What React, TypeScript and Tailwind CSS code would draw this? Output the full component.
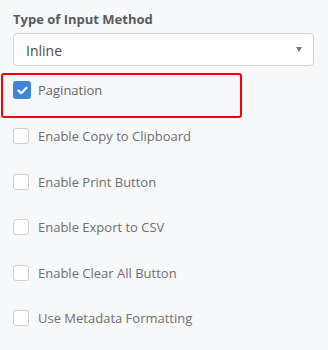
import React from "react";

const options = [
  "Enable Copy to Clipboard",
  "Enable Print Button",
  "Enable Export to CSV",
  "Enable Clear All Button",
  "Use Metadata Formatting",
];

export default function App() {
  return (
    <div
      className="w-[328px] h-[350px] bg-[#f7f8fa] pl-[13px] pr-[14px] pt-[10px] overflow-hidden"
      style={{ fontFamily: '"Open Sans", sans-serif' }}
    >
      <div className="h-[18px] leading-[18px] text-[13px] font-bold text-[#5a5a5a]">Type of Input Method</div>
      <div className="mt-[5px] h-[33px] bg-white border border-[#d3d3d3] rounded-[4px] flex items-center justify-between pl-[12px] pr-[11px]">
        <span className="text-[14px] text-[#4a4a4a] pt-[1px]">Inline</span>
        <span className="w-0 h-0 border-l-[3.5px] border-r-[3.5px] border-t-[5px] border-l-transparent border-r-transparent border-t-[#777]" />
      </div>

      <div className="mt-[7px] -ml-[12px] w-[241px] h-[45px] border-2 border-[#ff0000] rounded-[3px] pl-[10px] pt-[6px]">
        <div className="flex items-center h-[18px]">
          <span className="w-[18px] h-[18px] rounded-[3px] bg-[#3f87d6] flex items-center justify-center">
            <svg width="11" height="9" viewBox="0 0 11 9" fill="none">
              <path d="M1.5 4.6 L4.2 7.2 L9.5 1.8" stroke="white" strokeWidth="2.2" strokeLinecap="round" strokeLinejoin="round" />
            </svg>
          </span>
          <span className="ml-[7px] text-[13px] text-[#666] pt-[2px]">Pagination</span>
        </div>
      </div>

      <div className="mt-[10px] flex flex-col gap-[29.5px]">
        {options.map((label) => (
          <div key={label} className="flex items-center h-[16px]">
            <span className="w-[16px] h-[16px] rounded-[3px] bg-white border border-[#cfcfcf]" />
            <span className="ml-[9px] text-[13px] text-[#6e6e6e] pt-[2px]">{label}</span>
          </div>
        ))}
      </div>
    </div>
  );
}
